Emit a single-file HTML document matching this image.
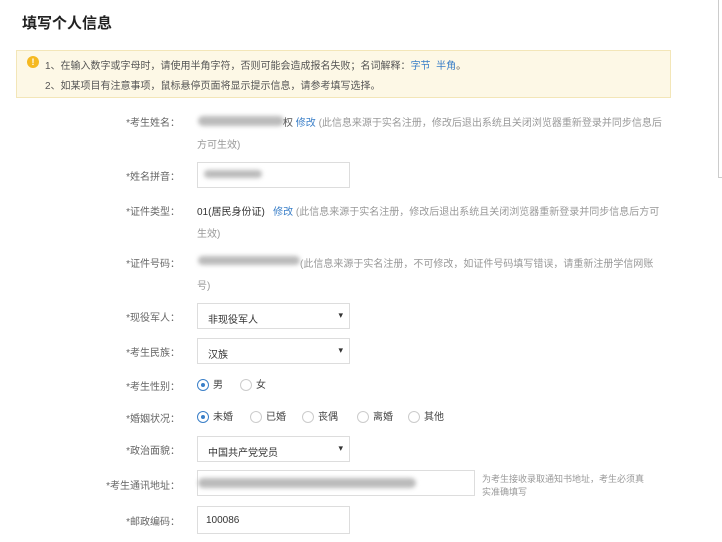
<!DOCTYPE html>
<html><head><meta charset="utf-8"><style>
*{margin:0;padding:0;box-sizing:border-box}
body{width:722px;height:542px;background:#fff;font-family:"Liberation Sans","Noto Sans CJK SC",sans-serif;font-size:10px;color:#555;position:relative;overflow:hidden}
.a{position:absolute;white-space:nowrap}
.lab{position:absolute;right:542px;color:#666;font-size:10px;white-space:nowrap}
.note{color:#999}
.link{color:#3a7fc8}
.box{position:absolute;border:1px solid #ddd;background:#fff}
.blur{position:absolute;background:#bbb;filter:blur(2px);border-radius:5px}
.sel:after{content:"▾";position:absolute;right:6px;top:6px;font-size:9px;color:#333}
.r{display:inline-block;width:12px;height:12px;border:1px solid #ccc;border-radius:50%;vertical-align:middle;margin-right:4px;position:relative}
.r.on{border-color:#3a7fc8}
.r.on:after{content:"";position:absolute;left:3px;top:3px;width:4px;height:4px;border-radius:50%;background:#3a7fc8}
.opt{position:absolute;font-size:10px;color:#444}
</style></head><body>
<div style="position:absolute;left:718px;top:0;width:1px;height:178px;background:#ccc"></div>
<div style="position:absolute;left:718px;top:177px;width:4px;height:1px;background:#ccc"></div>
<div class="a" style="left:22px;top:12px;font-size:15px;font-weight:bold;color:#222">填写个人信息</div>
<div style="position:absolute;left:16px;top:50px;width:655px;height:48px;background:#fdf8e6;border:1px solid #f3e6b8"></div>
<div style="position:absolute;left:27px;top:56px;width:12px;height:12px;border-radius:50%;background:#f5b921;color:#fff;font-size:9px;text-align:center;line-height:12px;font-weight:bold">!</div>
<div class="a" style="left:45px;top:57px;color:#555">1、在输入数字或字母时，请使用半角字符，否则可能会造成报名失败；名词解释：<span class="link">字节 &nbsp;半角</span>。</div>
<div class="a" style="left:45px;top:77px;color:#555">2、如某项目有注意事项，鼠标悬停页面将显示提示信息，请参考填写选择。</div>

<div class="lab" style="top:114px">*考生姓名：</div>
<div class="blur" style="left:198px;top:116px;width:86px;height:10px"></div>
<div class="a" style="left:283px;top:114px">权 <span class="link">修改</span> <span class="note">(此信息来源于实名注册，修改后退出系统且关闭浏览器重新登录并同步信息后</span></div>
<div class="a note" style="left:197px;top:136px">方可生效)</div>

<div class="lab" style="top:168px">*姓名拼音：</div>
<div class="box" style="left:197px;top:162px;width:153px;height:26px"></div>
<div class="blur" style="left:204px;top:170px;width:58px;height:8px"></div>

<div class="lab" style="top:203px">*证件类型：</div>
<div class="a" style="left:197px;top:203px;color:#333">01(居民身份证) &nbsp;&nbsp;<span class="link">修改</span> <span class="note">(此信息来源于实名注册，修改后退出系统且关闭浏览器重新登录并同步信息后方可</span></div>
<div class="a note" style="left:197px;top:225px">生效)</div>

<div class="lab" style="top:255px">*证件号码：</div>
<div class="blur" style="left:198px;top:256px;width:102px;height:9px"></div>
<div class="a note" style="left:300px;top:255px">(此信息来源于实名注册，不可修改，如证件号码填写错误，请重新注册学信网账</div>
<div class="a note" style="left:197px;top:277px">号)</div>

<div class="lab" style="top:309px">*现役军人：</div>
<div class="box sel" style="left:197px;top:303px;width:153px;height:26px"><span class="a" style="left:10px;top:7px;color:#333">非现役军人</span></div>
<div class="lab" style="top:344px">*考生民族：</div>
<div class="box sel" style="left:197px;top:338px;width:153px;height:26px"><span class="a" style="left:10px;top:7px;color:#333">汉族</span></div>

<div class="lab" style="top:378px">*考生性别：</div>
<div class="opt" style="left:197px;top:376px"><span class="r on"></span>男</div>
<div class="opt" style="left:240px;top:376px"><span class="r"></span>女</div>

<div class="lab" style="top:410px">*婚姻状况：</div>
<div class="opt" style="left:197px;top:408px"><span class="r on"></span>未婚</div>
<div class="opt" style="left:250px;top:408px"><span class="r"></span>已婚</div>
<div class="opt" style="left:302px;top:408px"><span class="r"></span>丧偶</div>
<div class="opt" style="left:357px;top:408px"><span class="r"></span>离婚</div>
<div class="opt" style="left:408px;top:408px"><span class="r"></span>其他</div>

<div class="lab" style="top:442px">*政治面貌：</div>
<div class="box sel" style="left:197px;top:436px;width:153px;height:26px"><span class="a" style="left:10px;top:7px;color:#333">中国共产党党员</span></div>

<div class="lab" style="top:477px">*考生通讯地址：</div>
<div class="box" style="left:197px;top:470px;width:278px;height:26px"></div>
<div class="blur" style="left:198px;top:478px;width:218px;height:10px"></div>
<div class="a note" style="left:482px;top:472px;font-size:9px">为考生接收录取通知书地址，考生必须真</div>
<div class="a note" style="left:482px;top:485px;font-size:9px">实准确填写</div>

<div class="lab" style="top:513px">*邮政编码：</div>
<div class="box" style="left:197px;top:506px;width:153px;height:28px"><span class="a" style="left:8px;top:8px;color:#333">100086</span></div>
</body></html>
